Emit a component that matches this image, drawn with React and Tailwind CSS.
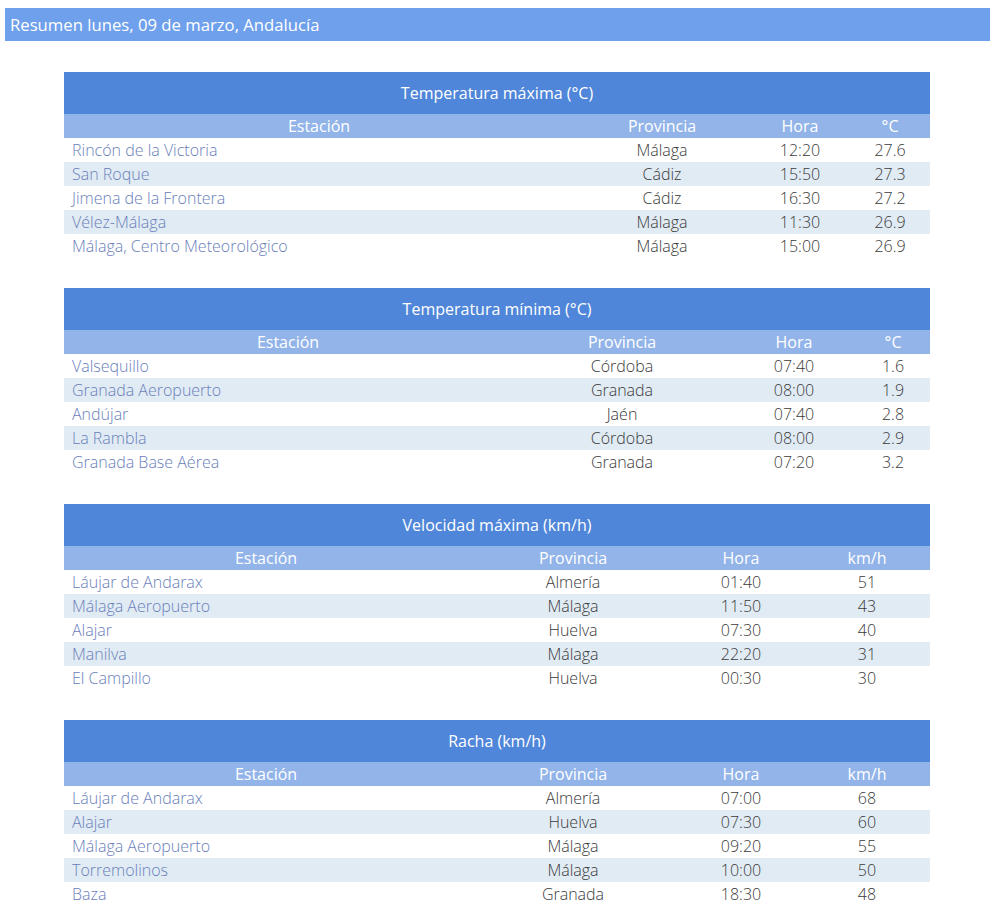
const tablas = [
  {
    titulo: "Temperatura máxima (°C)",
    unidad: "°C",
    cols: "grid-cols-[510px_176px_100px_80px]",
    filas: [
      ["Rincón de la Victoria", "Málaga", "12:20", "27.6"],
      ["San Roque", "Cádiz", "15:50", "27.3"],
      ["Jimena de la Frontera", "Cádiz", "16:30", "27.2"],
      ["Vélez-Málaga", "Málaga", "11:30", "26.9"],
      ["Málaga, Centro Meteorológico", "Málaga", "15:00", "26.9"],
    ],
  },
  {
    titulo: "Temperatura mínima (°C)",
    unidad: "°C",
    cols: "grid-cols-[448px_220px_124px_74px]",
    filas: [
      ["Valsequillo", "Córdoba", "07:40", "1.6"],
      ["Granada Aeropuerto", "Granada", "08:00", "1.9"],
      ["Andújar", "Jaén", "07:40", "2.8"],
      ["La Rambla", "Córdoba", "08:00", "2.9"],
      ["Granada Base Aérea", "Granada", "07:20", "3.2"],
    ],
  },
  {
    titulo: "Velocidad máxima (km/h)",
    unidad: "km/h",
    cols: "grid-cols-[404px_210px_126px_126px]",
    filas: [
      ["Láujar de Andarax", "Almería", "01:40", "51"],
      ["Málaga Aeropuerto", "Málaga", "11:50", "43"],
      ["Alajar", "Huelva", "07:30", "40"],
      ["Manilva", "Málaga", "22:20", "31"],
      ["El Campillo", "Huelva", "00:30", "30"],
    ],
  },
  {
    titulo: "Racha (km/h)",
    unidad: "km/h",
    cols: "grid-cols-[404px_210px_126px_126px]",
    filas: [
      ["Láujar de Andarax", "Almería", "07:00", "68"],
      ["Alajar", "Huelva", "07:30", "60"],
      ["Málaga Aeropuerto", "Málaga", "09:20", "55"],
      ["Torremolinos", "Málaga", "10:00", "50"],
      ["Baza", "Granada", "18:30", "48"],
    ],
  },
];

function Tabla({ t }) {
  return (
    <div className="w-[866px]">
      <div className="h-[42px] bg-[#4f86d9] text-white text-[16px] flex items-center justify-center">
        {t.titulo}
      </div>
      <div className={`grid ${t.cols} h-[24px] bg-[#92b4e9] text-white text-[16px] items-center text-center leading-[24px]`}>
        <span>Estación</span>
        <span>Provincia</span>
        <span>Hora</span>
        <span>{t.unidad}</span>
      </div>
      {t.filas.map((f, i) => (
        <div
          key={i}
          className={`grid ${t.cols} h-[24px] items-center text-[16px] font-light leading-[24px] ${
            i % 2 === 1 ? "bg-[#e1ebf4]" : "bg-white"
          }`}
        >
          <span className="pl-[8px] text-[#6a80ba]">{f[0]}</span>
          <span className="text-center text-[#3a3a3a]">{f[1]}</span>
          <span className="text-center text-[#3a3a3a]">{f[2]}</span>
          <span className="text-center text-[#3a3a3a]">{f[3]}</span>
        </div>
      ))}
    </div>
  );
}

export default function App() {
  return (
    <div className="w-[998px] h-[921px] bg-white overflow-hidden font-['Open_Sans',sans-serif]">
      <div className="ml-[5px] mt-[8px] w-[985px] h-[33px] bg-[#6fa0ec] text-white text-[16.7px] flex items-center pl-[5px]">
        Resumen lunes, 09 de marzo, Andalucía
      </div>
      <div className="mt-[31px] ml-[64px] flex flex-col gap-[30px]">
        {tablas.map((t) => (
          <Tabla key={t.titulo} t={t} />
        ))}
      </div>
    </div>
  );
}
